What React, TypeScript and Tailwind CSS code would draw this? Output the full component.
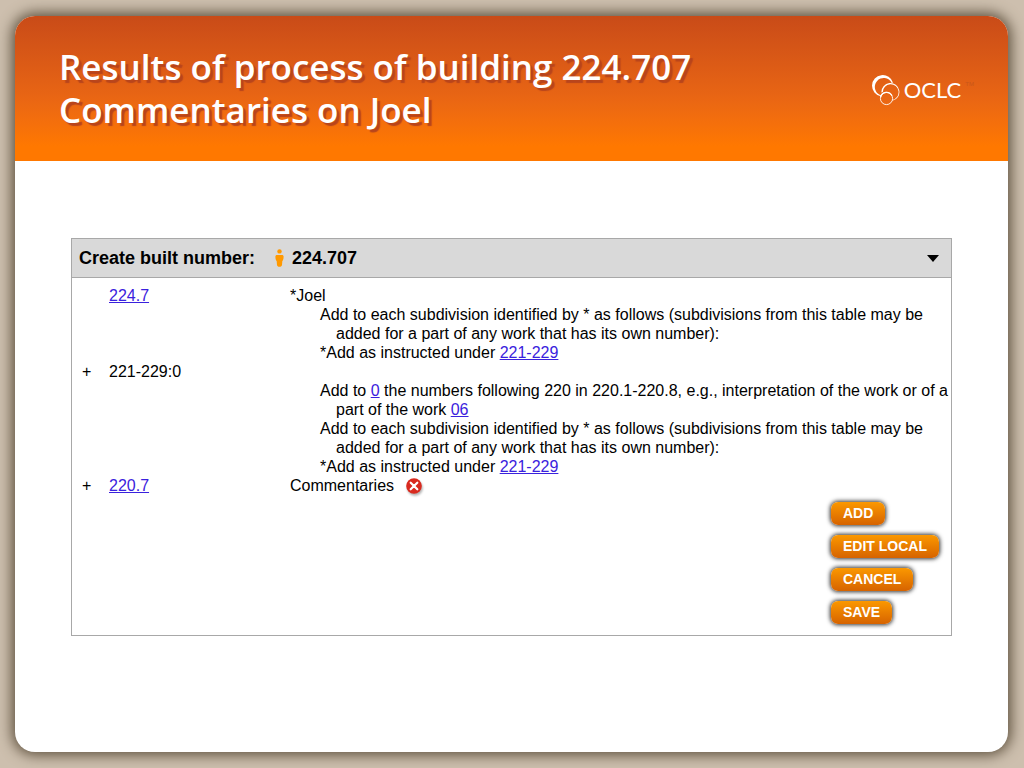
import type { ReactNode } from 'react';

const actions = ['ADD', 'EDIT LOCAL', 'CANCEL', 'SAVE'];

function NumberLink({ children }: { children: ReactNode }) {
  return (
    <a href="#" className="text-[#3a22dd] underline">
      {children}
    </a>
  );
}

function Note({ children }: { children: ReactNode }) {
  return <p className="pl-[46px] -indent-4">{children}</p>;
}

function OclcLogo() {
  return (
    <div className="flex items-center gap-1 text-white">
      <svg viewBox="0 0 29 32" className="h-8 w-[29px]" aria-hidden="true">
        <path
          fill="#fff"
          d="M9.800 22.300A10.700 10.700 0 1 1 22 8.800l-1.300.1A8.900 8.900 0 1 0 10.200 21.400Z"
        />
        <path
          fill="#fff"
          d="M10.400 18.500A9 9 0 1 1 21.500 26.800l-.1-.9a7.900 7.900 0 1 0-9.600-7.800Z"
        />
        <circle cx="15.500" cy="24.500" r="6.100" fill="none" stroke="#fff" strokeWidth="0.900" />
        <path fill="none" stroke="#fff" strokeWidth="1.300" d="M9.600 23a6.100 6.100 0 0 1 11.400-1.200" />
      </svg>
      <span className="font-[Lato,sans-serif] text-[22px] leading-6">OCLC</span>
      <span className="self-start pt-1 text-[6px] leading-3 text-[#c8561a]">TM</span>
    </div>
  );
}

function PersonIcon() {
  return (
    <svg viewBox="0 0 9 18" className="h-[18px] w-[9px]" aria-hidden="true">
      <circle cx="4.500" cy="2.400" r="2.200" fill="#f90" />
      <path
        fill="#f90"
        d="M2 6h5c1 0 1.600.6 1.600 1.600 0 2-.3 3.600-1.300 4.600L7 16c-.2 1.200-1 1.800-2.500 1.800S2.200 17.200 2 16l-.3-3.800C.7 11.200.4 9.600.4 7.600.4 6.600 1 6 2 6Z"
      />
    </svg>
  );
}

function RemoveIcon() {
  return (
    <svg viewBox="0 0 16 16" className="h-4 w-4 drop-shadow-[1px_2px_1px_rgba(0,0,0,0.3)]" aria-hidden="true">
      <circle cx="8" cy="8" r="7.800" fill="#d92a1f" />
      <path stroke="#fff" strokeWidth="2.200" strokeLinecap="round" d="m4.700 4.700 6.600 6.600m0-6.600-6.600 6.600" />
    </svg>
  );
}

export default function App() {
  return (
    <div className="flex min-h-screen flex-col bg-[#cdbfae] py-4 pr-4 pl-[15px] font-['Liberation_Sans',Arial,sans-serif]">
      <div className="flex flex-1 flex-col overflow-hidden rounded-[20px] bg-white shadow-[0_0_14px_3px_#5c4f3c]">
        <header className="flex items-start justify-between bg-linear-to-b from-[#c94b18] via-[#e86514] via-55% to-[#ff7800] to-90% pt-[29px] pr-[34px] pb-[30px] pl-11">
          <h1 className="font-['Open_Sans',sans-serif] text-[35px] leading-[43px] font-semibold text-white text-shadow-[3px_3px_1px_#b8451c]">
            Results of process of building 224.707
            <br />
            Commentaries on Joel
          </h1>
          <div className="pt-[29px]">
            <OclcLogo />
          </div>
        </header>

        <main className="px-14 pt-[77px] pb-14">
          <section className="border border-[#a8a8a8]">
            <div className="flex items-center border-b border-[#a8a8a8] bg-[#d9d9d9] pr-3 pl-[7px] text-black">
              <h2 className="flex flex-1 items-center py-[7px] text-[18px] leading-6 font-bold">
                Create built number:
                <span className="flex items-center gap-2 pl-5">
                  <PersonIcon />
                  224.707
                </span>
              </h2>
              <button type="button" aria-label="Collapse built number">
                <svg viewBox="0 0 12 7" className="h-[7px] w-3" aria-hidden="true">
                  <path d="M0 0h12L6 7Z" />
                </svg>
              </button>
            </div>

            <table className="mt-2 w-full table-fixed text-left text-[16px] leading-[19px] text-black">
              <colgroup>
                <col className="w-[37px]" />
                <col className="w-[181px]" />
                <col />
              </colgroup>
              <tbody className="align-top">
                <tr>
                  <td />
                  <td>
                    <NumberLink>224.7</NumberLink>
                  </td>
                  <td>
                    *Joel
                    <Note>
                      Add to each subdivision identified by * as follows (subdivisions from this table may be
                      added for a part of any work that has its own number):
                    </Note>
                    <Note>
                      *Add as instructed under <NumberLink>221-229</NumberLink>
                    </Note>
                  </td>
                </tr>
                <tr>
                  <td className="pl-[10px]">+</td>
                  <td>221-229:0</td>
                  <td className="pt-[19px]">
                    <Note>
                      Add to <NumberLink>0</NumberLink> the numbers following 220 in 220.1-220.8, e.g.,
                      interpretation of the work or of a part of the work <NumberLink>06</NumberLink>
                    </Note>
                    <Note>
                      Add to each subdivision identified by * as follows (subdivisions from this table may be
                      added for a part of any work that has its own number):
                    </Note>
                    <Note>
                      *Add as instructed under <NumberLink>221-229</NumberLink>
                    </Note>
                  </td>
                </tr>
                <tr>
                  <td className="pl-[10px]">+</td>
                  <td>
                    <NumberLink>220.7</NumberLink>
                  </td>
                  <td>
                    <div className="flex items-center gap-3">
                      Commentaries
                      <button type="button" aria-label="Remove Commentaries">
                        <RemoveIcon />
                      </button>
                    </div>
                  </td>
                </tr>
              </tbody>
            </table>

            <div className="mt-[7px] mr-3 mb-[11px] ml-auto flex w-fit flex-col items-start gap-[10px]">
              {actions.map((label) => (
                <button
                  key={label}
                  type="button"
                  className="rounded-[7px] bg-linear-to-b from-[#fb9800] to-[#d66300] px-3 text-[14px] leading-[23px] font-bold text-white shadow-[0_0_4px_1px_#333]"
                >
                  {label}
                </button>
              ))}
            </div>
          </section>
        </main>
      </div>
    </div>
  );
}
